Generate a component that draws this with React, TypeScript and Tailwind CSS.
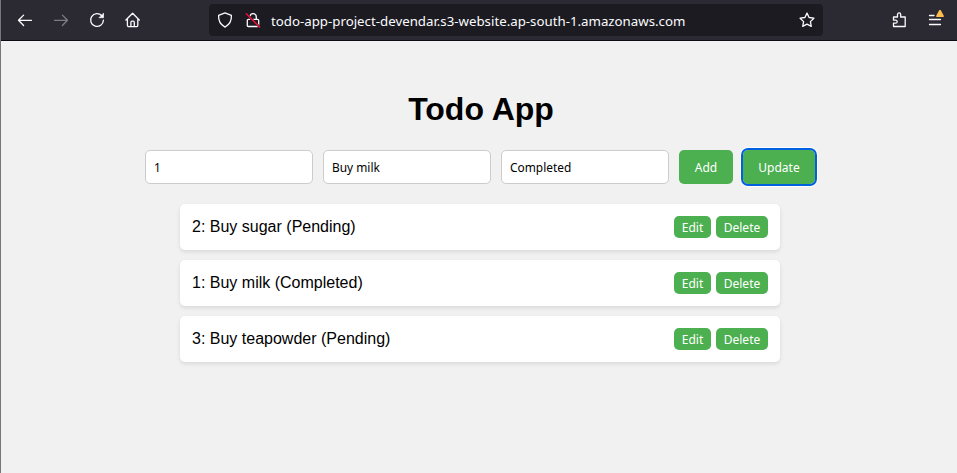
import type { ReactNode } from "react";

const todos = [
  { id: 2, title: "Buy sugar", status: "Pending" },
  { id: 1, title: "Buy milk", status: "Completed" },
  { id: 3, title: "Buy teapowder", status: "Pending" },
];

function Icon({ children, className = "" }: { children: ReactNode; className?: string }) {
  return (
    <svg
      className={`size-4 shrink-0 overflow-visible ${className}`}
      viewBox="0 0 16 16"
      fill="none"
      stroke="currentColor"
      strokeWidth="1.3"
      strokeLinecap="round"
      strokeLinejoin="round"
    >
      {children}
    </svg>
  );
}

function Toolbar() {
  return (
    <header className="flex h-[41px] items-center border-b border-[#0c0b12] bg-[#2b2a33] pl-4 text-[#fbfbfe]">
      <Icon>
        <path d="M14.5 8.3H2M6.6 3.1 1.5 8.3l5.1 5.2" />
      </Icon>
      <Icon className="ml-5 text-[#7d7c86]">
        <path d="M1.5 8.3h13M9.4 3.1 14.5 8.3 9.4 13.5" />
      </Icon>
      <Icon className="ml-5">
        <path d="M12.8 3.8A6.4 6.4 0 1 0 14.4 8.2" />
        <path d="M14.5 1.5v4.2h-4.2z" fill="currentColor" strokeWidth=".7" />
      </Icon>
      <Icon className="ml-5">
        <path d="M.9 8 7.6 1.3 14.3 8M2.4 7v6.6c0 .7.4 1.1 1.1 1.1h8.2c.7 0 1.1-.4 1.1-1.1V7M5.9 14.4v-4c0-.8.4-1.2 1.1-1.2h1.2c.7 0 1.1.4 1.1 1.2v4" />
      </Icon>
      <div className="ml-[68px] flex h-8 w-[614px] items-center rounded bg-[#1c1b22] pr-2 pl-2">
        <Icon>
          <path d="M8 .9 14.4 3.3c.3 4.8-.8 8.8-6.4 11.8C2.4 12.1 1.3 8.1 1.6 3.3z" />
        </Icon>
        <Icon className="ml-3">
          <path d="M5 4.1a3.2 3.2 0 0 1 6.3.8v2.3M8 7.3h4.600c.7 0 1.1.4 1.1 1.1v5c0 .7-.4 1.1-1.1 1.1H3.4c-.7 0-1.1-.4-1.1-1.1v-5c0-.7.4-1.1 1.1-1.1h1.400" />
          <path d="M1.3 1.8 14.6 15" stroke="#1c1b22" strokeWidth="2.2" />
          <path d="M1.3 1.8 14.6 15" stroke="#f0103c" strokeWidth="1.5" />
        </Icon>
        <span className="relative top-[2px] ml-[10px] flex-1 font-['Noto_Sans',sans-serif] text-[13.27px] leading-none whitespace-nowrap">
          todo-app-project-devendar.s3-website.ap-south-1.amazonaws.com
        </span>
        <Icon>
          <path d="m8 1.1 2.1 4.4 4.8.7-3.5 3.4.9 4.8L8 12.1l-4.3 2.3.9-4.8L1.1 6.2l4.8-.7z" />
        </Icon>
      </div>
      <Icon className="ml-[69px]">
        <path d="M1.5 5h4V2.5a1.6 1.6 0 0 1 3.2 0V5h4.5v9.500H1.5v-3.3h2.2a1.500 1.500 0 0 0 0-3H1.5z" />
      </Icon>
      <div className="relative ml-5 size-4">
        <Icon>
          <path d="M1.5 3.5H6M1.5 7.5h11M1.5 12.5h11" />
        </Icon>
        <svg className="absolute -top-[2px] left-[8px] h-[7px] w-2" viewBox="0 0 8 7">
          <path d="M3.3 0h1.4L7.9 6q.1 1-.7 1H.8Q0 7 .1 6z" fill="#ffbd4f" />
        </svg>
      </div>
    </header>
  );
}

function Field({ value }: { value: string }) {
  return (
    <input
      className="h-[34px] w-[168px] rounded-[5px] border border-[#ccc] bg-white px-2 font-['Noto_Sans',sans-serif] text-[11.9px] text-black outline-none"
      defaultValue={value}
    />
  );
}

function SmallButton({ label, className }: { label: string; className: string }) {
  return (
    <button
      className={`h-[22px] rounded-[5px] bg-[#4caf50] pt-[2px] font-['Noto_Sans',sans-serif] text-[12px] leading-none text-white ${className}`}
    >
      {label}
    </button>
  );
}

export default function App() {
  return (
    <div className="h-[473px] overflow-hidden border-l border-[#77777b] bg-[#f1f1f1] text-black">
      <Toolbar />
      <main className="flex flex-col items-center pt-[50px] pl-[2px] font-['Liberation_Sans',Arial,sans-serif]">
        <h1 className="pl-[2px] text-[32px] leading-9 font-bold">Todo App</h1>
        <div className="mt-[23px] flex gap-[10px]">
          <Field value="1" />
          <Field value="Buy milk" />
          <Field value="Completed" />
          <button className="h-[34px] w-[54px] rounded-[5px] bg-[#4caf50] pt-[2px] font-['Noto_Sans',sans-serif] text-[12px] text-white">
            Add
          </button>
          <button className="h-[34px] w-[72px] rounded-[5px] bg-[#4caf50] pt-[2px] font-['Noto_Sans',sans-serif] text-[12px] text-white shadow-[0_0_0_3px_white] outline-2 outline-[#0061e0]">
            Update
          </button>
        </div>
        <ul className="mt-5 flex w-[600px] flex-col gap-[10px]">
          {todos.map((t) => (
            <li
              key={t.id}
              className="flex h-[46px] items-center rounded-[5px] bg-white px-3 shadow-[0_2px_4px_rgba(0,0,0,0.1)]"
            >
              <span className="flex-1 text-base">
                {t.id}: {t.title} ({t.status})
              </span>
              <SmallButton label="Edit" className="w-[37px]" />
              <SmallButton label="Delete" className="ml-[5px] w-[52px]" />
            </li>
          ))}
        </ul>
      </main>
    </div>
  );
}
